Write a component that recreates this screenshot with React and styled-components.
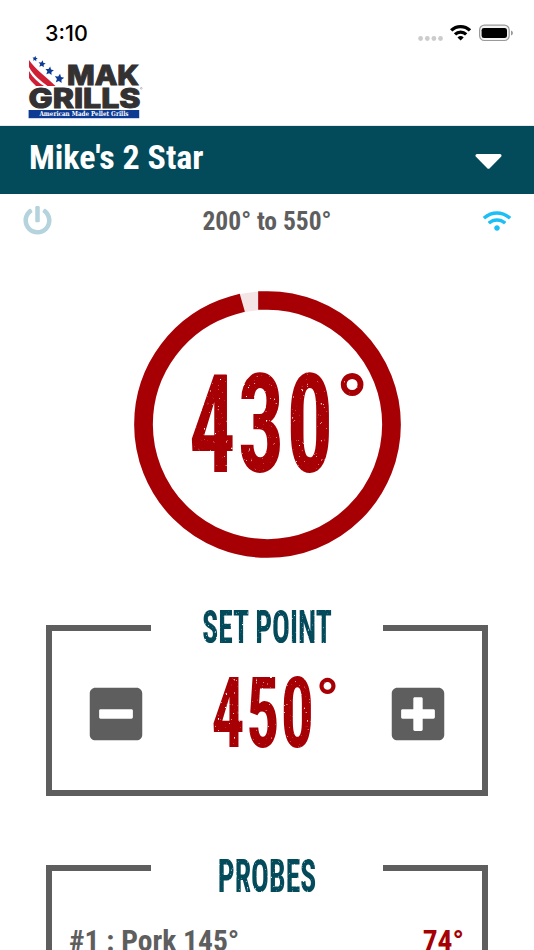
import React from "react";
import styled, { createGlobalStyle } from "styled-components";
import {
  FaCaretDown,
  FaMinusSquare,
  FaPlusSquare,
  FaPowerOff,
  FaWifi,
} from "react-icons/fa";

const teal = "#034a5b";
const red = "#a60005";
const grey = "#5e5e5e";

const GlobalStyles = createGlobalStyle`
  * {
    box-sizing: border-box;
  }
  body {
    margin: 0;
    background: white;
    font-family: "Roboto Condensed", Roboto, sans-serif;
  }
`;

const Screen = styled.div`
  width: 534px;
  height: 950px;
  overflow: hidden;
  background: white;
`;

const StatusBar = styled.div`
  display: flex;
  align-items: center;
  justify-content: space-between;
  height: 56px;
  padding: 10px 20px 0 45px;
`;

const Clock = styled.div`
  font-family: Inter, sans-serif;
  font-size: 21.5px;
  font-weight: 550;
  line-height: 46px;
`;

const LogoBar = styled.div`
  height: 70px;
  padding-left: 28px;
  border-bottom: 1px solid #e8eaea;
`;

const GrillSelect = styled.div`
  display: flex;
  justify-content: space-between;
  height: 68px;
  padding: 8px 23px 0 29px;
  background: ${teal};
  color: white;

  svg {
    margin-top: 3px;
  }
`;

const Label = styled.span`
  white-space: pre;
  font-size: ${(props) => props.$size}px;
  font-weight: 700;
  line-height: ${(props) => props.$line}px;
`;

const InfoRow = styled.div`
  display: grid;
  grid-template-columns: 60px 1fr 60px;
  align-items: center;
  justify-items: center;
  height: 54px;
  padding: 0 7px;
  color: ${grey};

  svg:first-child {
    margin-bottom: 1px;
  }
`;

const Gauge = styled.div`
  display: grid;
  place-items: center;
  height: 267px;
  margin-top: 43px;

  > * {
    grid-area: 1 / 1;
  }
`;

const Reading = styled.div`
  display: flex;
  align-items: flex-start;
  padding-left: 0.175em;
  color: ${red};
  font-size: ${(props) => props.$size}px;
  font-weight: 700;
  line-height: 1;
  filter: url(#worn);
`;

const Digits = styled.div`
  display: flex;
  justify-content: center;
  width: 1.06em;
  letter-spacing: 0.022em;

  span {
    transform: scaleX(0.67);
  }
`;

const Degree = styled.div`
  font-family: Roboto, sans-serif;
  font-size: 0.64em;
  font-weight: 500;
  line-height: 1.17;
`;

const Panel = styled.section`
  width: 442px;
  height: ${(props) => props.$height}px;
  margin: ${(props) => props.$top}px auto 0;
`;

const PanelTop = styled.div`
  display: flex;
  align-items: flex-start;
  justify-content: space-between;
  height: 6px;
`;

const Rule = styled.div`
  width: 105px;
  height: 6px;
  background: ${grey};
`;

const PanelTitle = styled.h2`
  flex: 1;
  margin: -${(props) => props.$lift}px 0 0;
  text-align: center;
  font-size: 46px;
  line-height: 50px;
  color: ${teal};
  transform: scaleX(0.645);
  filter: url(#wornSmall);
`;

const PanelBody = styled.div`
  display: flex;
  align-items: center;
  justify-content: space-between;
  height: 165px;
  padding: 6px 34px 0;
  border: solid ${grey};
  border-width: 0 6px 6px;
`;

const StepButton = styled.button`
  display: flex;
  padding: 0;
  border: none;
  background: none;
  color: ${grey};
`;

const ProbeBody = styled.div`
  display: flex;
  justify-content: space-between;
  height: 200px;
  padding: 50px 18px 0 17px;
  border: solid ${grey};
  border-width: 0 6px;
  color: ${grey};
`;

const ProbeTemp = styled.div`
  color: ${red};
`;

// letterpress wear for the display lettering
const Worn = () => (
  <svg width="0" height="0" style={{ display: "block" }}>
    <filter id="worn" x="-0.1" y="0" width="1.2" height="1" colorInterpolationFilters="sRGB">
      <feTurbulence type="fractalNoise" baseFrequency="0.36" numOctaves="3" seed="8" />
      <feColorMatrix values="0 0 0 0 0  0 0 0 0 0  0 0 0 0 0  0 0 0 -7 6" />
      <feComposite in="SourceGraphic" operator="in" />
    </filter>
    <filter id="wornSmall" x="0" y="0" width="1" height="1" colorInterpolationFilters="sRGB">
      <feTurbulence type="fractalNoise" baseFrequency="0.4" numOctaves="3" seed="3" />
      <feColorMatrix values="0 0 0 0 0  0 0 0 0 0  0 0 0 0 0  0 0 0 -5 4.400" />
      <feComposite in="SourceGraphic" operator="in" />
    </filter>
  </svg>
);

const StatusIcons = () => (
  <svg width="96" height="20" viewBox="418 22 96 20">
    <g fill="#cccccc">
      <circle cx="420.6" cy="37.5" r="2.4" />
      <circle cx="427.3" cy="37.5" r="2.4" />
      <circle cx="433.9" cy="37.5" r="2.4" />
      <circle cx="440.5" cy="37.5" r="2.4" />
    </g>
    <g fill="none" stroke="black" strokeWidth="3.3">
      <path d="M451.2 29.4a13.4 13.4 0 0 1 18.8 0" />
      <path d="M455 33.4a8.2 8.2 0 0 1 11.2 0" />
    </g>
    <path d="M460.6 39.6l-3.1-3.2a4.6 4.6 0 0 1 6.2 0z" />
    <rect x="479.6" y="24.1" width="29.6" height="15.4" rx="4.8" fill="#f4f4f4" stroke="#999" strokeWidth="1.2" />
    <rect x="481.6" y="26.9" width="25.4" height="10.2" rx="2.4" />
    <path d="M511 29.4c2.6 1 2.6 4 0 5z" fill="#999" />
  </svg>
);

const stars = [
  [35, 58.7, 2.8],
  [42, 64, 3.8],
  [49.5, 71, 4.5],
  [59.3, 78.6, 5],
];

const starPoints = ([cx, cy, r]) =>
  Array.from({ length: 10 }, (_, i) => {
    const radius = i % 2 ? r * 0.48 : r;
    const angle = (i * Math.PI) / 5 - Math.PI / 2 + 0.15;
    return `${cx + radius * Math.cos(angle)},${cy + radius * Math.sin(angle)}`;
  }).join(" ");

const Logo = () => (
  <svg width="116" height="64" viewBox="28 56 116 64">
    <g fill="#cf1f35">
      <path d="M29 60c3 4 7 9 12 13s10 9 14.5 13h-8C42 82 33 75 29 67z" />
      <path d="M29 71c4 7 10 12 15 15h-8c-3-3-6-6-7-8z" />
    </g>
    <g fill="#0d3a93">
      {stars.map((star) => (
        <polygon key={star[0]} points={starPoints(star)} />
      ))}
      <rect x="28.6" y="110" width="110.6" height="8.2" />
    </g>
    <g
      fill="#333132"
      stroke="#333132"
      strokeWidth="1"
      fontFamily="Inter, sans-serif"
      fontWeight="800"
      fontSize="27.5"
    >
      <text x="67" y="85.4" textLength="72" lengthAdjust="spacingAndGlyphs">
        MAK
      </text>
      <text x="28.5" y="108.2" textLength="112" lengthAdjust="spacingAndGlyphs">
        GRILLS
      </text>
    </g>
    <text
      x="39.5"
      y="116.4"
      fill="white"
      fontFamily="DejaVu Serif, serif"
      fontWeight="700"
      fontSize="6.8"
      textLength="89"
      lengthAdjust="spacingAndGlyphs"
    >
      American Made Pellet Grills
    </text>
    <circle cx="141.3" cy="88.3" r="0.9" fill="none" stroke="#888" strokeWidth="0.5" />
  </svg>
);

// the ring fills up as the grill gets closer to its set point
const Ring = ({ value, target }) => (
  <svg width="267" height="267" viewBox="0 0 267 267">
    <circle cx="133.5" cy="133.5" r="124" fill="none" stroke="#f5e4e6" strokeWidth="18.7" />
    <circle
      cx="133.5"
      cy="133.5"
      r="124"
      fill="none"
      stroke={red}
      strokeWidth="18.7"
      strokeLinecap="square"
      pathLength={target}
      strokeDasharray={`${value} ${target}`}
      transform="rotate(-90 133.5 133.5)"
    />
  </svg>
);

const Temperature = ({ size, value }) => (
  <Reading $size={size}>
    <Digits>
      <span>{value}</span>
    </Digits>
    <Degree>°</Degree>
  </Reading>
);

const App = () => (
  <>
    <GlobalStyles />
    <Screen>
      <Worn />
      <StatusBar>
        <Clock>3:10</Clock>
        <StatusIcons />
      </StatusBar>
      <LogoBar>
        <Logo />
      </LogoBar>
      <GrillSelect>
        <Label $size={34} $line={46}>
          Mike's 2 Star
        </Label>
        <FaCaretDown size={45} />
      </GrillSelect>
      <InfoRow>
        <FaPowerOff size={29} color="#b5d3dc" />
        <Label $size={25.5} $line={36}>
          200° to 550°
        </Label>
        <FaWifi size={28} color="#1bbff5" />
      </InfoRow>
      <Gauge>
        <Ring value={430} target={450} />
        <Temperature size={138} value={430} />
      </Gauge>
      <Panel $top={67} $height={171}>
        <PanelTop>
          <Rule />
          <PanelTitle $lift={23}>SET POINT</PanelTitle>
          <Rule />
        </PanelTop>
        <PanelBody>
          <StepButton>
            <FaMinusSquare size={60} />
          </StepButton>
          <Temperature size={98} value={450} />
          <StepButton>
            <FaPlusSquare size={60} />
          </StepButton>
        </PanelBody>
      </Panel>
      <Panel $top={69} $height={206}>
        <PanelTop>
          <Rule />
          <PanelTitle $lift={14}>PROBES</PanelTitle>
          <Rule />
        </PanelTop>
        <ProbeBody>
          <Label $size={29.5} $line={40}>
            #1 : Pork 145°
          </Label>
          <ProbeTemp>
            <Label $size={29.5} $line={40}>
              74°
            </Label>
          </ProbeTemp>
        </ProbeBody>
      </Panel>
    </Screen>
  </>
);

export default App;
